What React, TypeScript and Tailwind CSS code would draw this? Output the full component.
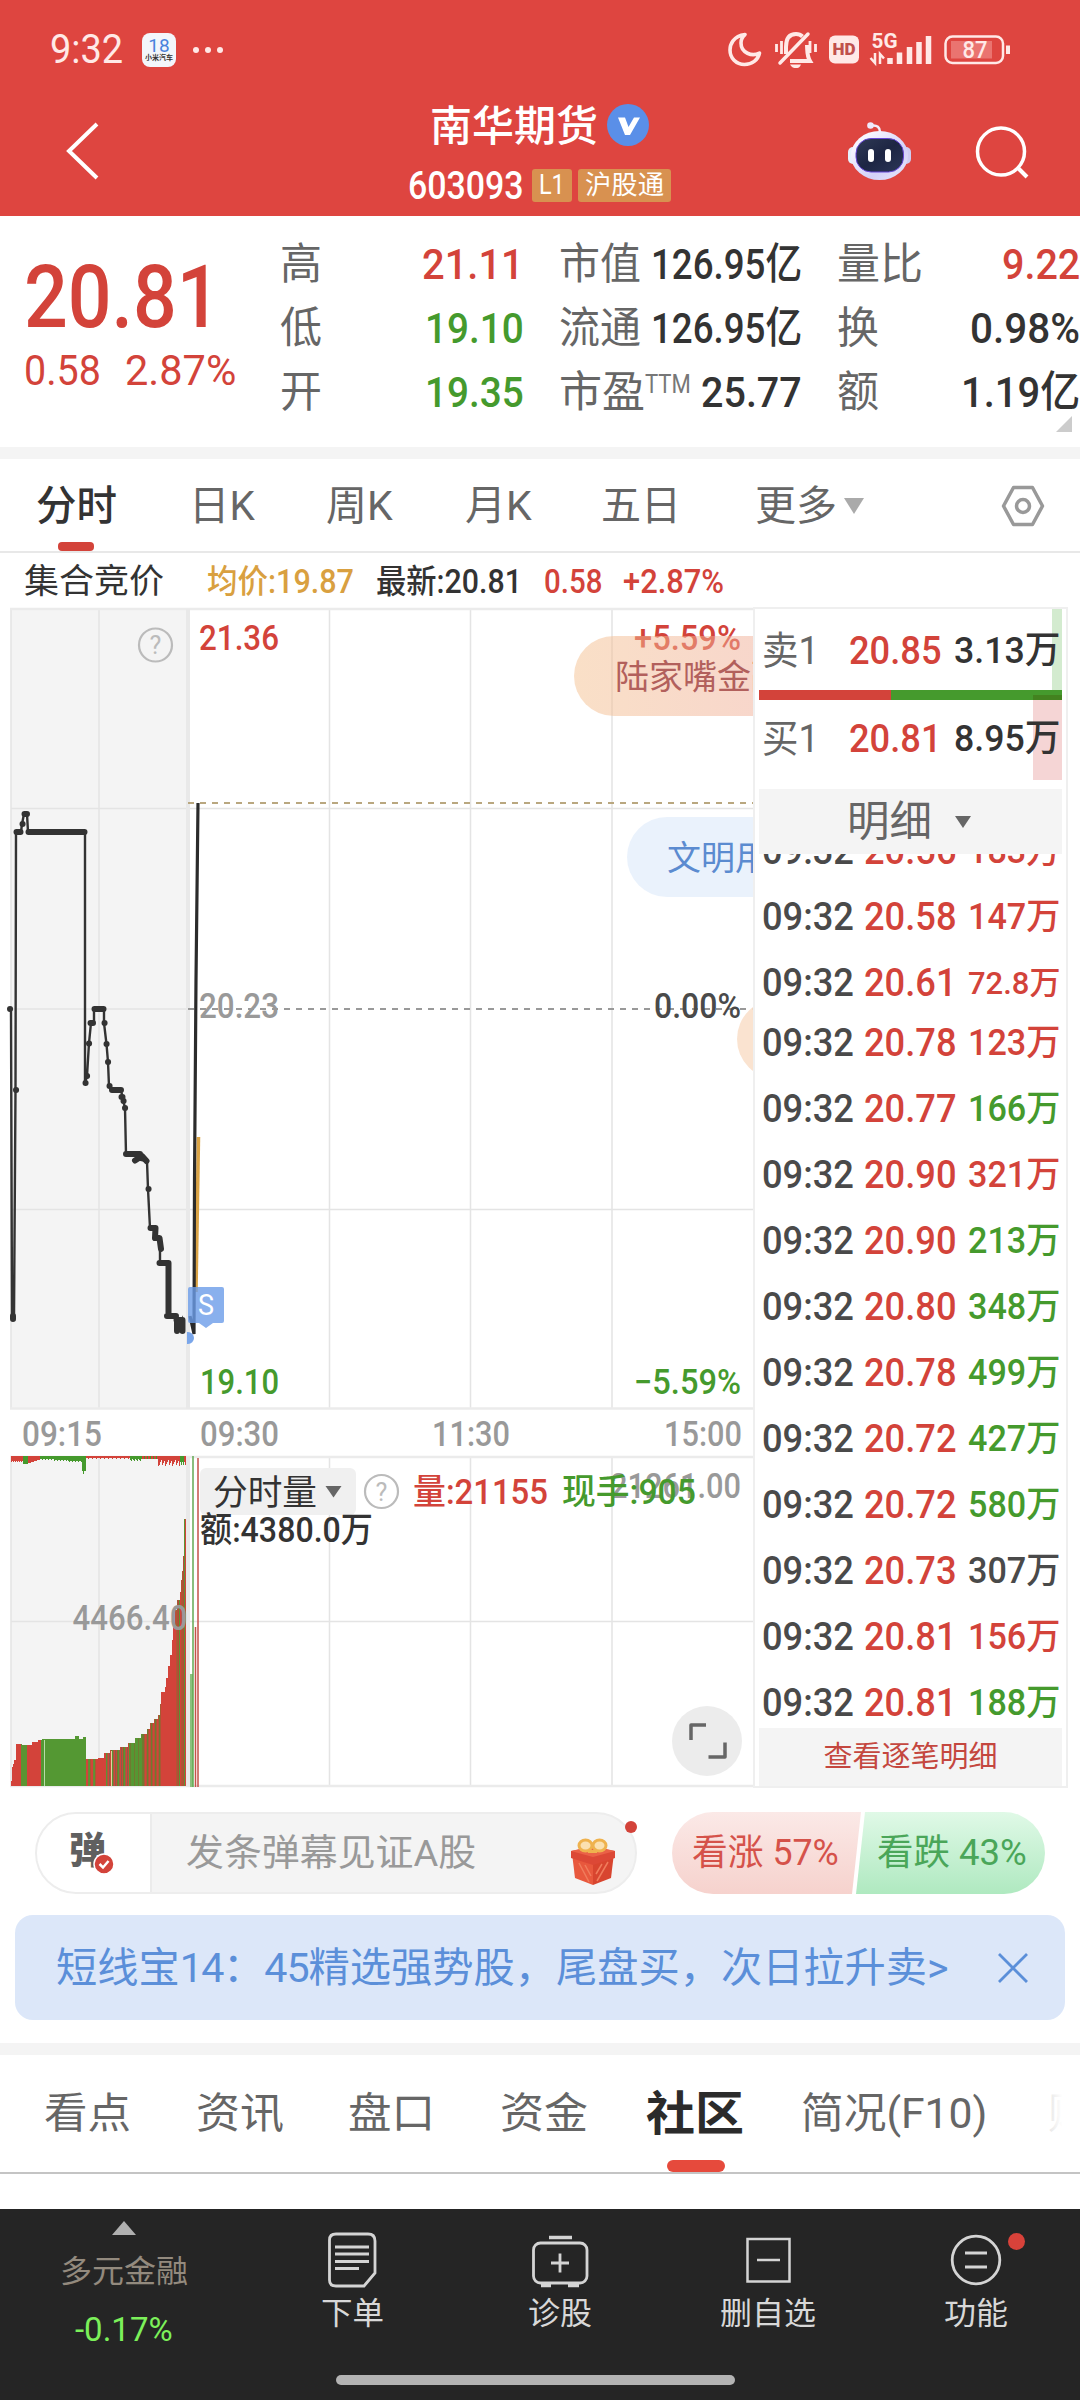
import { useLayoutEffect, useRef, useState, type ReactNode } from 'react';
import { clsx } from 'clsx';

const RED = '#d3433a';
const GREEN = '#459a2d';

/* Squeezes a single line of text into the width given by its class */
function Fit({ className, children }: { className?: string; children: ReactNode }) {
  const box = useRef<HTMLSpanElement>(null);
  const text = useRef<HTMLSpanElement>(null);
  const [scale, setScale] = useState(1);

  useLayoutEffect(() => {
    if (box.current && text.current && text.current.offsetWidth) {
      setScale(box.current.clientWidth / text.current.offsetWidth);
    }
  }, [children]);

  return (
    <span ref={box} className={clsx('block shrink-0 whitespace-nowrap', className)}>
      <span ref={text} className="inline-block origin-left" style={{ transform: `scaleX(${scale})` }}>
        {children}
      </span>
    </span>
  );
}

function StatusBar() {
  return (
    <div className="flex h-[100px] items-center pl-[50px] text-[#ffe9e7]">
      <Fit className="w-[73px] text-[40px] leading-[100px]">9:32</Fit>
      <div className="ml-[19px] flex h-[34px] w-[34px] flex-col items-center justify-center rounded-lg bg-[#f3f6fb]">
        <span className="text-[19px] leading-[17px] text-[#4a83dd]">18</span>
        <span className="text-[7px] leading-[9px] font-bold text-[#333]">小米汽车</span>
      </div>
      <div className="ml-[17px] flex gap-[6px]">
        <i className="h-[6px] w-[6px] rounded-full bg-[#ffe9e7]" />
        <i className="h-[6px] w-[6px] rounded-full bg-[#ffe9e7]" />
        <i className="h-[6px] w-[6px] rounded-full bg-[#ffe9e7]" />
      </div>

      <svg className="ml-[503px] h-10 w-[290px]" viewBox="726 30 290 40" fill="none" stroke="#ffe9e7" strokeWidth="3">
        <path d="M745 34.500C733 36 730 45 730 50C730 58 736 64.500 744.500 64.500C752 64.500 758 60 759.500 53C752 57 741 53 741 43C741 39 742 37 745 34.500Z" strokeWidth="3.600" strokeLinejoin="round" />
        <path d="M780 63L808 34" strokeWidth="3.500" strokeLinecap="round" />
        <path d="M786 54V47C786 39 789 34 796 34C799 34 801 35 802.500 36.500M807 45C807.500 54 807 56 810 61H790" strokeWidth="4" />
        <path d="M790 64.500H801C800 67.500 798 68 796 68S791.500 67.500 790 64.500Z" fill="#ffe9e7" stroke="none" />
        <path d="M776.500 44V52M781.500 41V54M810 41V53M815.500 44V52" strokeWidth="2.800" />
        <rect x="829" y="35.500" width="30" height="28" rx="6" fill="#ffe9e7" stroke="none" />
        <text x="832.500" y="55" textLength="23" lengthAdjust="spacingAndGlyphs" fontSize="16" fontWeight="900" fill="#c0504c" stroke="none">HD</text>
        <text x="871.500" y="48" textLength="26" lengthAdjust="spacingAndGlyphs" fontSize="21" fontWeight="700" fill="#ffe9e7" stroke="none">5G</text>
        <path d="M875 53V63L870.500 58M880 64V54L884 58.500" strokeWidth="2.500" />
        <path d="M890 64V58M899.500 64V52.500M909.500 64V47M919 64V42M928.500 64V36" strokeWidth="5.500" />
        <rect x="945.500" y="36.500" width="57.500" height="26.500" rx="7" strokeWidth="2.500" />
        <rect x="951" y="41" width="41" height="17.500" fill="#f08e8b" stroke="none" opacity=".65" />
        <path d="M1008 45.500V54" strokeWidth="4" />
        <text x="962.500" y="58" textLength="25" lengthAdjust="spacingAndGlyphs" fontSize="23.500" fontWeight="500" fill="#ffe9e7" stroke="none">87</text>
      </svg>
    </div>
  );
}

function RobotIcon() {
  return (
    <svg className="h-[60px] w-16" viewBox="848 121 64 60">
      <defs>
        <linearGradient id="robot-head" x1="0" y1="0" x2="1" y2="1">
          <stop offset="0.2" stopColor="#f6f5ff" />
          <stop offset="0.65" stopColor="#d3d0f8" />
          <stop offset="1" stopColor="#e9e9fa" />
        </linearGradient>
        <linearGradient id="robot-face" x1="0" y1="0" x2="1" y2="1">
          <stop offset="0" stopColor="#2f3a55" />
          <stop offset="0.5" stopColor="#1d2543" />
          <stop offset="1" stopColor="#2b3657" />
        </linearGradient>
      </defs>
      <path d="M880 132C880 127 877 125 872 125.500" fill="none" stroke="#f2effc" strokeWidth="2.500" />
      <circle cx="870.500" cy="125.500" r="3.300" fill="#efeafc" />
      <rect x="848" y="147" width="10" height="17" rx="5" fill="#e6f0fc" />
      <rect x="901" y="147" width="10" height="17" rx="5" fill="#cfcdf2" />
      <ellipse cx="879.500" cy="155.500" rx="28.500" ry="24.500" fill="url(#robot-head)" />
      <rect x="856" y="138.500" width="47.500" height="33.500" rx="15" fill="url(#robot-face)" stroke="#6746d6" strokeWidth="1" />
      <rect x="868" y="149" width="6" height="13" rx="3" fill="#fff" />
      <rect x="885" y="149" width="6" height="13" rx="3" fill="#fff" />
    </svg>
  );
}

function Header() {
  return (
    <header className="h-[216px] bg-[#de4540] text-white">
      <StatusBar />
      <div className="flex h-[104px] items-start">
        <svg className="mt-[21px] ml-[64px] h-[60px] w-9" viewBox="64 121 36 60" fill="none" stroke="#fff" strokeWidth="4">
          <path d="M97 124L69 151L97 178" />
        </svg>
        <div className="ml-[307px] w-[266px]">
          <div className="flex h-[50px] items-center pl-[23px]">
            <Fit className="w-[168px] pt-[3px] text-[42px] leading-[50px] font-medium">南华期货</Fit>
            <svg className="ml-[9px] h-[42px] w-[42px]" viewBox="0 0 42 42">
              <circle cx="21" cy="21" r="21" fill="#5a8fe8" />
              <path d="M11 13.500H18L21.500 23L27 13.500H33L23 31H18Z" fill="#fff" />
            </svg>
          </div>
          <div className="mt-[17px] flex h-[36px] items-center pl-[1px]">
            <Fit className="w-[116px] pt-[2px] text-[38px] leading-9 font-medium">603093</Fit>
            <div className="ml-[8px] flex h-[33px] w-10 justify-center rounded-[3px] bg-[#d89150]">
              <Fit className="w-[26px] text-[27px] leading-[33px]">L1</Fit>
            </div>
            <div className="ml-[6px] flex h-[33px] w-[93px] justify-center rounded-[3px] bg-[#d89150]">
              <Fit className="w-[79px] text-[26px] leading-[33px]">沪股通</Fit>
            </div>
          </div>
        </div>
        <div className="mt-[21px] ml-[175px]"><RobotIcon /></div>
        <svg className="mt-[24px] ml-[62px] h-[58px] w-[58px]" viewBox="974 124 58 58" fill="none" stroke="#fff" strokeWidth="3.500">
          <circle cx="1001" cy="151.500" r="23.500" />
          <path d="M1018 168L1027 177" strokeWidth="4" />
        </svg>
      </div>
    </header>
  );
}

function Quote() {
  return (
    <section className="relative flex h-[231px] font-medium text-[#333]">
      <div className="w-[280px] pt-[37px] pl-[24px] text-[#d3433a]">
        <Fit className="w-[197px] text-[88px] leading-[88px]">20.81</Fit>
        <div className="mt-[6px] flex">
          <Fit className="w-[77px] text-[43px] leading-[46px] font-normal">0.58</Fit>
          <Fit className="ml-[24px] w-[111px] text-[43px] leading-[46px] font-normal">2.87%</Fit>
        </div>
      </div>

      <div className="grid w-[244px] auto-rows-[64px] content-start pt-[16px] text-[43px] leading-[64px]">
        <div className="flex justify-between text-[#d3433a]">
          <Fit className="w-[42px] font-normal text-[#666]">高</Fit>
          <Fit className="w-[102px]">21.11</Fit>
        </div>
        <div className="flex justify-between text-[#459a2d]">
          <Fit className="w-[42px] font-normal text-[#666]">低</Fit>
          <Fit className="w-[99px]">19.10</Fit>
        </div>
        <div className="flex justify-between text-[#459a2d]">
          <Fit className="w-[42px] font-normal text-[#666]">开</Fit>
          <Fit className="w-[99px]">19.35</Fit>
        </div>
      </div>

      <div className="ml-[35px] grid w-[243px] auto-rows-[64px] content-start pt-[16px] text-[43px] leading-[64px]">
        <div className="flex justify-between">
          <Fit className="w-[82px] font-normal text-[#666]">市值</Fit>
          <Fit className="w-[151px]">126.95亿</Fit>
        </div>
        <div className="flex justify-between">
          <Fit className="w-[82px] font-normal text-[#666]">流通</Fit>
          <Fit className="w-[151px]">126.95亿</Fit>
        </div>
        <div className="flex">
          <Fit className="w-[86px] font-normal text-[#666]">市盈</Fit>
          <Fit className="w-[46px] text-[25px] leading-[50px] font-normal text-[#777]">TTM</Fit>
          <Fit className="ml-auto w-[101px]">25.77</Fit>
        </div>
      </div>

      <div className="ml-[35px] grid w-[243px] auto-rows-[64px] content-start pt-[16px] text-[43px] leading-[64px]">
        <div className="flex justify-between">
          <Fit className="w-[86px] font-normal text-[#666]">量比</Fit>
          <Fit className="w-[78px] text-[#d3433a]">9.22</Fit>
        </div>
        <div className="flex justify-between">
          <Fit className="w-[42px] font-normal text-[#666]">换</Fit>
          <Fit className="w-[110px]">0.98%</Fit>
        </div>
        <div className="flex justify-between">
          <Fit className="w-[42px] font-normal text-[#666]">额</Fit>
          <Fit className="w-[119px]">1.19亿</Fit>
        </div>
      </div>
      <svg className="absolute right-2 bottom-[15px] h-4 w-4" viewBox="0 0 16 16"><path d="M16 0V16H0Z" fill="#ccc" /></svg>
    </section>
  );
}

function PeriodTabs() {
  return (
    <nav className="relative flex h-[94px] items-center border-b-2 border-[#e8e8e8] pt-[2px] pl-[36px] text-[41px] leading-[92px] text-[#666]">
      <Fit className="w-[81px] font-medium text-[#333]">分时</Fit>
      <Fit className="ml-[72px] w-[66px]">日K</Fit>
      <Fit className="ml-[71px] w-[67px]">周K</Fit>
      <Fit className="ml-[72px] w-[67px]">月K</Fit>
      <Fit className="ml-[69px] w-[80px]">五日</Fit>
      <Fit className="ml-[74px] w-[82px]">更多</Fit>
      <svg className="ml-[7px] h-4 w-5" viewBox="0 0 20 16"><path d="M0 0H20L10 16Z" fill="#aaa" /></svg>
      <svg className="ml-[137px] h-11 w-11" viewBox="0 0 44 44" fill="none" stroke="#999" strokeWidth="3.500" strokeLinejoin="round">
        <path d="M12.500 3.500H31.500L41.500 22L31.500 40.500H12.500L2.500 22Z" />
        <circle cx="22" cy="22" r="6.500" />
      </svg>
      <i className="absolute bottom-0 left-[58px] h-[9px] w-9 rounded bg-[#d3433a]" />
    </nav>
  );
}

/* Call auction price path, every pair is x,y inside the chart */
const AUCTION =
  '10,1009 11,1012 12,1316 14,1318 15.5,1090 16,832 21,832 22,824 24,814 27,814 28,832 85,832 85,1083 87,1076 89,1043 91,1023 94,1023 94,1009 104,1009 104,1023 106.5,1044 108,1062 109,1086 111,1090 121,1090 123,1100 125,1108 126,1154 139,1154 141,1160 147,1161 148,1189 150,1228 155,1228 156,1239 160,1239 160,1263 169,1263 168,1316 176,1316 177,1331 182,1320 183,1331';

const AUCTION_DOTS =
  'M10 1009h.1M13 1316v3M16 1090h.1M16.500 832h4M22.500 824h.1M24.500 814h2.500M28.500 832H84.500M85.500 1083h.1M87 1076h.1M89 1043.500h.1M90.500 1023h2.500M94.500 1009H103.500M104.500 1023h.1M106.500 1044h.1M108 1062h.1M109.500 1086h.1M112 1090H121M121.500 1097h1M123.500 1101h.1M125 1108h.1M126 1154H140M135 1160.500L142 1156L146.500 1161M148.500 1189h.1M150.500 1228H155.500L155 1238H159.500L161 1249M159.500 1263H168.500V1316M167 1316H176M176.500 1320H182.500M177 1320V1331M182.500 1320V1331';

/* Auction volume: x, top of the bar */
const VOLUME_STEPS: number[][] = [
  [11, 1781], [12, 1767], [13, 1764], [14, 1760], [16, 1744], [22, 1745], [27, 1745], [32, 1742], [38, 1740], [42, 1739],
  [75, 1736], [79, 1739], [83, 1737], [86, 1759], [98, 1758], [104, 1753], [110, 1750], [120, 1747], [128, 1743],
  [135, 1738], [141, 1734], [147, 1729], [150, 1723], [154, 1719], [158, 1715], [160, 1704], [161, 1692], [165, 1687],
  [166, 1678], [168, 1666], [170, 1655], [172, 1640], [173, 1625], [175, 1610], [177, 1600], [180, 1592], [181, 1580],
  [182, 1571], [183, 1556], [184, 1519], [186, 1519],
];

const MIX_RED = '#a65a33';
const MIX_GREEN = '#6f7a30';

function volumeColor(x: number) {
  if (x < 21) return RED;
  if (x < 27) return '#5c9433';
  if (x < 41) return RED;
  if (x < 86) return '#549833';
  if (x < 98) return [MIX_RED, RED, RED, '#6a8a36', '#5c9433'][x % 5];
  if (x < 106) return RED;
  if (x < 129) return [RED, '#8d5b4b', '#c54b37', '#6f7a30', '#5c9433', '#9b6040'][(x * 7) % 6];
  if (x < 143) return ['#549833', '#549833', MIX_GREEN, '#5c9433'][x % 4];
  if (x < 161) return [MIX_RED, RED, '#b55235', '#6f7a30'][x % 4];
  if (x < 175) return RED;
  return [RED, '#b55235', MIX_RED, '#b24a38', '#5c9433'][x % 5];
}

const volumeBars = Array.from({ length: 175 }, (_, i) => {
  const x = 11 + i;
  let top = VOLUME_STEPS[0][1];
  VOLUME_STEPS.forEach(([sx, sy]) => {
    if (x >= sx) top = sy;
  });
  return { x, top, color: volumeColor(x) };
});

/* Unmatched volume hanging from the top edge */
const unmatchedBars = Array.from({ length: 175 }, (_, i) => {
  const x = 11 + i;
  let h = 2;
  let color = RED;
  if (x < 23) h = 4 + (x % 2);
  else if (x < 28) { h = 7; color = GREEN; }
  else if (x < 40) h = 6 - Math.floor((x - 28) / 3);
  else if (x < 82) { h = 2 + Math.floor((x - 40) / 14) + (x % 3 === 0 ? 1 : 0); color = GREEN; }
  else if (x < 86) { h = x === 83 ? 17 : 14; color = GREEN; }
  else if (x < 130) h = x % 4 === 0 ? 2 : 1;
  else if (x < 142) { h = 2 + (x % 3); color = GREEN; }
  else if (x < 158) { h = 2; color = x % 3 === 0 ? GREEN : RED; }
  else if (x === 159) h = 8;
  else if (x < 180) h = 3 + ((x * 5) % 7);
  else { h = x % 2 ? 8 : 5; color = x < 184 ? GREEN : RED; }
  return { x, h: h + 1, color };
});

type LabelProps = { x: number; y: number; w: number; size?: number; color?: string; weight?: number; children: string };

function Label({ x, y, w, size = 35, color = '#999', weight = 500, children }: LabelProps) {
  return (
    <text x={x} y={y + size * 0.355} textLength={w} lengthAdjust="spacingAndGlyphs" fontSize={size} fontWeight={weight} fill={color}>
      {children}
    </text>
  );
}

function Help({ x, y }: { x: number; y: number }) {
  return (
    <g>
      <circle cx={x} cy={y} r="16.500" fill="none" stroke="#bbb" strokeWidth="2.200" />
      <text x={x} y={y + 9} textAnchor="middle" fontSize="25" fill="#bbb">?</text>
    </g>
  );
}

function PriceChart() {
  return (
    <div className="relative w-[753px] overflow-hidden">
      <svg className="block h-[1182px] w-[753px]" viewBox="0 607 753 1182">
        <rect x="11" y="609" width="177" height="800" fill="#f4f4f4" />
        <rect x="11" y="1457" width="177" height="329" fill="#f4f4f4" />
        <g stroke="#e4e4e4" strokeWidth="1.500">
          <path d="M11 609V1409M99 609V1409M329.500 609V1409M470.500 609V1409M612 609V1409" />
          <path d="M11 808.500H753M11 1009H188M11 1209.500H753" />
          <path d="M11 1457V1787M99 1457V1787M329.500 1457V1787M470.500 1457V1787M612 1457V1787M11 1621.500H753" />
          <path d="M10 609H753M10 1408.500H753M10 1457H753M10 1786H753" stroke="#ebebeb" strokeWidth="2.500" />
          <path d="M188 609V1409M188 1457V1787" stroke="#e9e9e9" strokeWidth="4" />
        </g>
        <path d="M188 803H753" stroke="#b9a77f" strokeWidth="2" strokeDasharray="6 6" />
        <path d="M188 1009H753" stroke="#999" strokeWidth="2" strokeDasharray="6 6" />

        <Help x={155.5} y={645} />
        <Label x={199} y={638} w={80} color={RED}>21.36</Label>
        <Label x={634} y={638} w={107} color={RED}>+5.59%</Label>
        <Label x={199} y={1006} w={80}>20.23</Label>
        <Label x={654} y={1006} w={87} color="#4a4a4a">0.00%</Label>
        <Label x={200} y={1382} w={79} color={GREEN}>19.10</Label>
        <Label x={634} y={1382} w={107} color={GREEN}>−5.59%</Label>

        <polyline points={AUCTION} fill="none" stroke="#333" strokeWidth="2.400" />
        <path d={AUCTION_DOTS} fill="none" stroke="#333" strokeWidth="6" strokeLinecap="round" strokeLinejoin="round" />
        <path d="M196 1292L198.500 1137" stroke="#dba445" strokeWidth="3.500" />
        <path d="M190 1316L194 1334L194.500 1180L196 980L198 803" fill="none" stroke="#2b2b2b" strokeWidth="3.200" />
        <path d="M188 1333A5 5 0 0 1 188 1343Z" fill="#7aa6ea" stroke="#7aa6ea" strokeWidth="2" />
        <path d="M190 1287H222Q224 1287 224 1289V1321Q224 1323 222 1323H213L206 1328L199 1323H190Q188 1323 188 1321V1289Q188 1287 190 1287Z" fill="#6b9ce9" fillOpacity=".8" />
        <Label x={198} y={1305} w={16} size={29} color="#fff" weight={400}>S</Label>

        <Label x={22} y={1434} w={80}>09:15</Label>
        <Label x={200} y={1434} w={79}>09:30</Label>
        <Label x={432} y={1434} w={78}>11:30</Label>
        <Label x={664} y={1434} w={78}>15:00</Label>

        <g shapeRendering="crispEdges">
          {volumeBars.map((b) => (
            <rect key={b.x} x={b.x} y={b.top} width="1" height={1786 - b.top} fill={b.color} />
          ))}
          {unmatchedBars.map((b) => (
            <rect key={b.x} x={b.x} y="1456" width="1" height={b.h} fill={b.color} />
          ))}
          <rect x="44" y="1740" width="1" height="46" fill="#b9dba8" />
          <rect x="111" y="1751" width="1" height="35" fill="#e9cfa0" />
        </g>
        <path d="M191.500 1674V1787" stroke="#8cc07e" strokeWidth="3" />
        <path d="M193 1456V1787" stroke="#63a852" strokeWidth="1.500" />
        <path d="M195.500 1627V1787M198 1458V1787" stroke="#c5524a" strokeWidth="1.500" />
        <Label x={72.5} y={1617.5} w={115}>4466.40</Label>

        <rect x="200" y="1468" width="156" height="47" rx="6" fill="#f0f0f0" />
        <Label x={213} y={1492.5} w={104} size={35} color="#333" weight={400}>分时量</Label>
        <path d="M325.500 1486H341.500L333.500 1497.500Z" fill="#666" />
        <Help x={381.5} y={1491.5} />
        <Label x={610} y={1485.500} w={131}>21261.00</Label>
        <Label x={413} y={1492} w={135} color={RED}>量:21155</Label>
        <Label x={562} y={1492} w={134} color={GREEN}>现手:905</Label>
        <Label x={200} y={1529.5} w={173} color="#333">额:4380.0万</Label>

        <circle cx="707" cy="1741" r="35" fill="#ececec" />
        <path d="M691 1740V1725H706M725 1742.500V1757H708.500" fill="none" stroke="#666" strokeWidth="3.500" strokeLinejoin="round" />
      </svg>

      {/* Comments floating in from the right */}
      <div className="absolute top-[29px] left-[574px] h-20 w-80 rounded-full bg-linear-to-r from-[#f4c08f]/50 to-[#eda09c]/50 pl-[41px] text-[34px] leading-[83px] whitespace-nowrap text-[#b2605c]">陆家嘴金融</div>
      <div className="absolute top-[210px] left-[627px] h-20 w-80 rounded-full bg-[#e8f1fc]/90 pl-[40px] text-[34px] leading-[83px] whitespace-nowrap text-[#5b8bd0]">文明用语</div>
      <div className="absolute top-[392px] left-[737px] h-20 w-80 rounded-full bg-[#f9e0cb]/90" />
    </div>
  );
}

const trades = [
  { price: '20.56', vol: '183万', tone: 'text-[#d3433a]' },
  { price: '20.58', vol: '147万', tone: 'text-[#d3433a]' },
  { price: '20.61', vol: '72.8万', tone: 'text-[#d3433a]' },
  { price: '20.78', vol: '123万', tone: 'text-[#d3433a]' },
  { price: '20.77', vol: '166万', tone: 'text-[#459a2d]' },
  { price: '20.90', vol: '321万', tone: 'text-[#d3433a]' },
  { price: '20.90', vol: '213万', tone: 'text-[#459a2d]' },
  { price: '20.80', vol: '348万', tone: 'text-[#459a2d]' },
  { price: '20.78', vol: '499万', tone: 'text-[#459a2d]' },
  { price: '20.72', vol: '427万', tone: 'text-[#459a2d]' },
  { price: '20.72', vol: '580万', tone: 'text-[#459a2d]' },
  { price: '20.73', vol: '307万', tone: 'text-[#4a4a4a]' },
  { price: '20.81', vol: '156万', tone: 'text-[#d3433a]' },
  { price: '20.81', vol: '188万', tone: 'text-[#459a2d]' },
];

function OrderBook() {
  return (
    <aside className="flex h-[1181px] w-[315px] flex-col border-2 border-[#efefef] px-1 font-medium">
      <div className="relative flex h-[81px] items-center pt-[3px] pl-[3px] text-[39px] leading-[78px]">
        <i className="absolute top-0 right-0 h-full w-[10px] bg-[#d3ebcf]" />
        <Fit className="relative w-[57px] font-normal text-[#666]">卖1</Fit>
        <Fit className="relative ml-[30px] w-[93px] text-[#d3433a]">20.85</Fit>
        <Fit className="relative ml-[12px] w-[106px] text-[37px] text-[#333]">3.13万</Fit>
      </div>
      <div className="relative h-[10px] w-full bg-[#459a2d]">
        <i className="block h-full w-[132px] bg-[#d3433a]" />
        <i className="absolute top-[5px] right-0 h-[5px] w-[29px] bg-[#43821f]" />
      </div>
      <div className="relative flex h-[80px] items-center pl-[3px] text-[39px] leading-[76px]">
        <i className="absolute top-0 right-0 h-full w-[29px] bg-[#f5d5d5]" />
        <Fit className="relative -mt-[3px] w-[57px] font-normal text-[#666]">买1</Fit>
        <Fit className="relative -mt-[3px] ml-[30px] w-[93px] text-[#d3433a]">20.81</Fit>
        <Fit className="relative -mt-[3px] ml-[12px] w-[106px] text-[37px] text-[#333]">8.95万</Fit>
      </div>
      <div className="mt-[9px] flex h-[65px] shrink-0 items-center bg-[#f4f4f4] pl-[88px] text-[42px] leading-[65px] font-normal text-[#666]">
        <Fit className="w-[85px]">明细</Fit>
        <svg className="ml-[23px] h-3 w-4" viewBox="0 0 16 12"><path d="M0 0H16L8 12Z" fill="#666" /></svg>
      </div>
      <div className="flex h-[874px] flex-col justify-end overflow-hidden">
        <div className="-mb-[8px]">
          {trades.map((t, i) => (
            <div key={i} className={clsx('flex pl-[3px] text-[39px] leading-[66px]', i === 2 ? 'h-[60.500px]' : 'h-[66px]')}>
              <Fit className="w-[92px] text-[#4a4a4a]">09:32</Fit>
              <Fit className="ml-[10px] w-[93px] text-[#d3433a]">{t.price}</Fit>
              <Fit className={clsx('ml-[11px] w-[92px]', t.tone, t.vol.includes('.') ? 'text-[32px]' : 'text-[36px]')}>{t.vol}</Fit>
            </div>
          ))}
        </div>
      </div>
      <div className="flex h-[58px] shrink-0 justify-center bg-[#f4f4f4] text-[29px] leading-[59px] font-normal text-[#c4473f]">
        <Fit className="w-[174px]">查看逐笔明细</Fit>
      </div>
    </aside>
  );
}

function GiftIcon() {
  return (
    <svg className="h-[48px] w-[44px]" viewBox="0 0 44 48">
      <path d="M1 15L22 22V47L4 40Z" fill="#e8583d" />
      <path d="M43 15L22 22V47L40 40Z" fill="#d8452f" />
      <path d="M0 13L22 9L44 13V20L22 27L0 20Z" fill="#dc4836" />
      <path d="M0 13L22 8L44 13L22 19Z" fill="#ea6147" />
      <path d="M8 25L18 44M14 27L20 38M37 24L26 43M31 26L25 36" stroke="#f07c5c" strokeWidth="1.500" />
      <g fill="#fbe0b0" stroke="#efb24e" strokeWidth="3">
        <ellipse cx="14.500" cy="7.500" rx="6.500" ry="5.500" />
        <ellipse cx="28.500" cy="7.500" rx="6.500" ry="5.500" />
        <path d="M17 13.500H26" />
      </g>
    </svg>
  );
}

function CommentBar() {
  return (
    <div className="mt-[22px] flex h-[82px] pl-[35px]">
      <div className="relative flex w-[602px] items-center overflow-visible rounded-full border-2 border-[#ededed] bg-[#f4f4f4]">
        <div className="relative h-[78px] w-[115px] rounded-l-full border-r-2 border-[#ebebeb] bg-white pl-[32px] text-[37px] leading-[75px] font-black text-[#606060]">
          弹
          <svg className="absolute top-[39px] left-[56px] h-[22px] w-[22px]" viewBox="0 0 22 22">
            <circle cx="11" cy="11" r="10" fill={RED} stroke="#fff" strokeWidth="1.500" />
            <path d="M6.500 11L10 14.500L15.500 8" fill="none" stroke="#fff" strokeWidth="2.500" />
          </svg>
        </div>
        <Fit className="ml-[34px] w-[290px] pt-[2px] text-[37px] leading-[78px] text-[#999]">发条弹幕见证A股</Fit>
        <div className="mt-[18px] ml-[95px]"><GiftIcon /></div>
        <i className="absolute top-[7px] right-[-2px] h-3 w-3 rounded-full bg-[#d3433a]" />
      </div>
      <div className="relative ml-[35px] flex w-[373px] text-[36px] leading-[83px]">
        <svg className="absolute inset-0 h-[82px] w-[373px]" viewBox="0 0 373 82">
          <defs>
            <linearGradient id="vote-up" x1="0" y1="0" x2="0" y2="1">
              <stop offset="0" stopColor="#fbe9e7" />
              <stop offset="1" stopColor="#f6d2cd" />
            </linearGradient>
            <linearGradient id="vote-down" x1="0" y1="0" x2="0" y2="1">
              <stop offset="0" stopColor="#e0f9e7" />
              <stop offset="1" stopColor="#afe9c0" />
            </linearGradient>
          </defs>
          <path d="M41 0H189L180 82H41A41 41 0 0 1 41 0Z" fill="url(#vote-up)" />
          <path d="M193 0H332A41 41 0 0 1 332 82H184Z" fill="url(#vote-down)" />
        </svg>
        <Fit className="relative ml-[20px] w-[147px] text-[#d5524a]">看涨 57%</Fit>
        <Fit className="relative ml-[38px] w-[150px] text-[#4aa659]">看跌 43%</Fit>
      </div>
    </div>
  );
}

function Banner() {
  return (
    <div className="mt-[21px] mr-[15px] ml-[15px] flex h-[105px] items-center rounded-[18px] bg-[#dce7f9] pl-[41px] text-[#5b8fd9]">
      {/* digits run a little tighter than the Han glyphs around them */}
      <Fit className="w-[893px] pt-[2px] text-[41px] leading-[103px]">
        短线宝<span className="tracking-[-1.5px]">14</span>：<span className="tracking-[-1px]">45</span>精选强势股，尾盘买，次日拉升卖&gt;
      </Fit>
      <svg className="ml-[48px] h-8 w-8" viewBox="0 0 32 32" fill="none" stroke="#5b8fd9" strokeWidth="2.800">
        <path d="M2 2L30 30M30 2L2 30" />
      </svg>
    </div>
  );
}

function SectionTabs() {
  return (
    <nav className="relative flex h-[119px] overflow-hidden border-b-2 border-[#c4c4c4] pl-[44px] text-[42px] leading-[117px] text-[#666]">
      <Fit className="w-[87px]">看点</Fit>
      <Fit className="ml-[65px] w-[88px]">资讯</Fit>
      <Fit className="ml-[64px] w-[87px]">盘口</Fit>
      <Fit className="ml-[65px] w-[88px]">资金</Fit>
      <Fit className="ml-[58px] w-[98px] text-[47px] font-bold text-[#2b2b2b]">社区</Fit>
      <Fit className="ml-[57px] w-[186px]">简况(F10)</Fit>
      <span className="ml-[61px] w-[44px] shrink-0">财</span>
      <i className="absolute top-0 right-0 h-[117px] w-[70px] bg-linear-to-r from-white/40 to-white to-75%" />
      <i className="absolute bottom-0 left-[667px] h-3 w-[58px] rounded-full bg-[#e64a3c]" />
    </nav>
  );
}

function BottomBar() {
  return (
    <footer className="relative flex h-[191px] bg-[#252525] text-[31px] text-[#d8d8d8]">
      <div className="flex w-[248px] flex-col items-center pt-3">
        <svg className="h-[14px] w-6" viewBox="0 0 24 14"><path d="M12 0L24 14H0Z" fill="#b0b0b0" /></svg>
        <Fit className="mt-[17px] w-[128px] leading-[40px] text-[#938a7e]">多元金融</Fit>
        <Fit className="mt-[18px] w-[98px] text-[33px] leading-[40px] text-[#7cf05a]">-0.17%</Fit>
      </div>
      <div className="flex w-[208px] flex-col items-center pt-[22px]">
        <svg className="h-[58px] w-[52px]" viewBox="326 2231 52 58" fill="none" stroke="#d4d4d4" strokeWidth="2.800">
          <path d="M336 2234H368Q375 2234 375 2241V2273L364 2286H336Q329.500 2286 329.500 2280V2240Q329.500 2234 336 2234Z" />
          <path d="M335 2247H369M335 2254H369M335 2261.500H369M335 2268.500H359" />
        </svg>
        <Fit className="mt-[5px] w-[63px] leading-[40px]">下单</Fit>
      </div>
      <div className="flex w-[208px] flex-col items-center pt-[22px]">
        <svg className="h-[58px] w-[60px]" viewBox="530 2231 60 58" fill="none" stroke="#d4d4d4" strokeWidth="2.800">
          <path d="M549 2237.500H572M541 2285.500H551M568 2285.500H579" strokeWidth="3.500" />
          <rect x="533.500" y="2243" width="53.500" height="40" rx="7" />
          <path d="M551 2263H569M560 2253.500V2272.500" />
        </svg>
        <Fit className="mt-[5px] w-[64px] leading-[40px]">诊股</Fit>
      </div>
      <div className="flex w-[208px] flex-col items-center pt-[22px]">
        <svg className="h-[58px] w-[60px]" viewBox="738 2231 60 58" fill="none" stroke="#d4d4d4" strokeWidth="2.500">
          <rect x="747.500" y="2239" width="42" height="42.500" />
          <path d="M757 2260H780" />
        </svg>
        <Fit className="mt-[5px] w-[96px] leading-[40px]">删自选</Fit>
      </div>
      <div className="flex w-[208px] flex-col items-center pt-[22px]">
        <svg className="h-[58px] w-[60px]" viewBox="946 2231 60 58" fill="none" stroke="#d4d4d4" strokeWidth="2.800">
          <circle cx="976" cy="2260" r="23.800" />
          <path d="M965 2253H987M965 2267H987" />
        </svg>
        <Fit className="mt-[5px] w-[64px] leading-[40px]">功能</Fit>
      </div>
      <i className="absolute top-[24px] left-[1008px] h-[17px] w-[17px] rounded-full bg-[#d8423a]" />
      <i className="absolute bottom-[15px] left-[336px] h-[10px] w-[399px] rounded-full bg-[#b3b3b3]" />
    </footer>
  );
}

export default function App() {
  return (
    <div className="h-[2400px] w-[1080px] overflow-hidden bg-white font-[Roboto,'Noto_Sans_CJK_SC',sans-serif]">
      <Header />
      <Quote />
      <div className="h-3 bg-[#f4f4f4]" />
      <PeriodTabs />
      <div className="flex h-[54px] pl-[24px] text-[34px] leading-[57px] text-[#333]">
        <Fit className="w-[140px]">集合竞价</Fit>
        <Fit className="ml-[43px] w-[147px] text-[33px] font-medium text-[#d9a040]">均价:19.87</Fit>
        <Fit className="ml-[22px] w-[146px] text-[33px] font-medium">最新:20.81</Fit>
        <Fit className="ml-[22px] w-[58px] text-[33px] font-medium text-[#d3433a]">0.58</Fit>
        <Fit className="ml-[21px] w-[101px] text-[33px] font-medium text-[#d3433a]">+2.87%</Fit>
      </div>
      <div className="flex h-[1183px]">
        <PriceChart />
        <OrderBook />
      </div>
      <CommentBar />
      <Banner />
      <div className="mt-[23px] h-3 bg-[#f4f4f4]" />
      <SectionTabs />
      <div className="h-[35px]" />
      <BottomBar />
    </div>
  );
}
